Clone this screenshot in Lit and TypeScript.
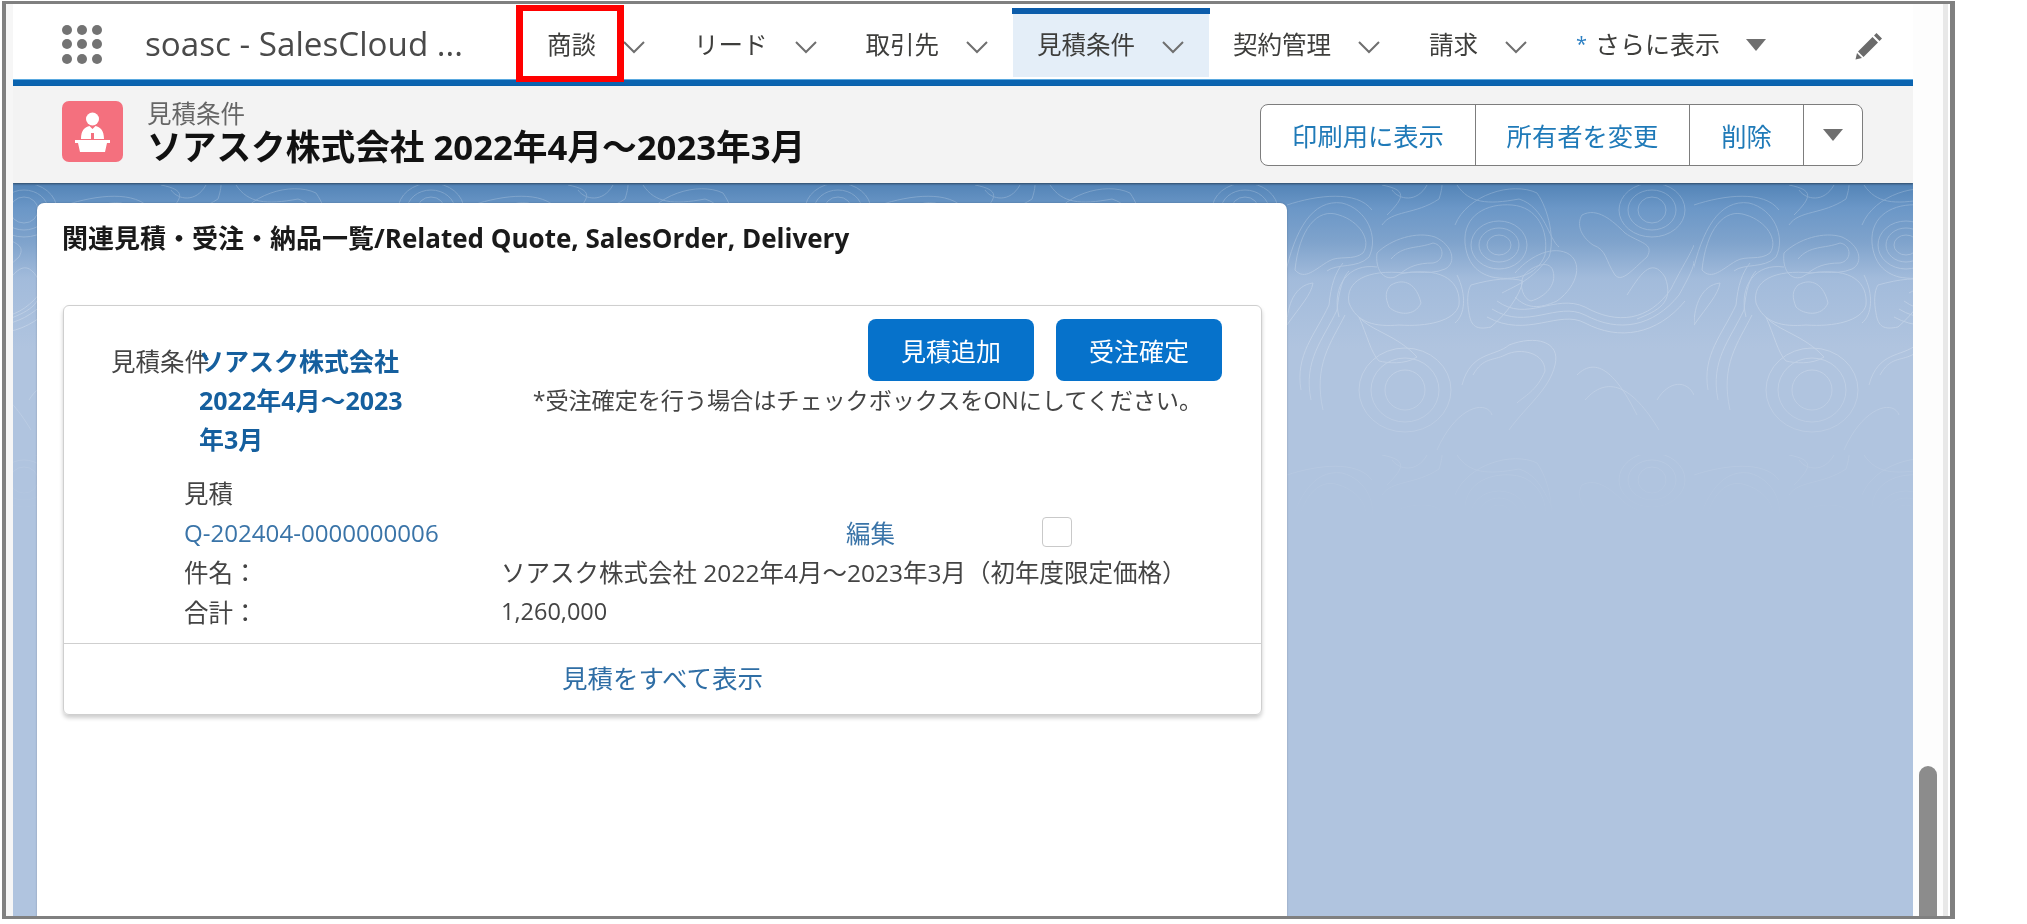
import { LitElement, html, css, svg } from "lit";
import { customElement } from "lit/decorators.js";

const chevron = html`<svg class="chev" viewBox="0 0 24 14"><path d="M2 2 L12 12 L22 2" fill="none" stroke="#6f6f6f" stroke-width="2"/></svg>`;

const contours = svg`
  <ellipse cx="212" cy="60" rx="12" ry="10"/><ellipse cx="212" cy="60" rx="20" ry="17"/><ellipse cx="212" cy="60" rx="28" ry="24"/>
  <path d="M178 58 C176 30 200 18 225 20 C250 22 262 45 258 70 C250 92 225 96 205 92 C190 88 180 78 178 58Z"/>
  <path d="M168 40 C180 10 225 -4 250 8 C262 25 268 55 262 72 C245 95 230 100 215 108"/>
  <ellipse cx="365" cy="25" rx="14" ry="13"/><ellipse cx="365" cy="25" rx="24" ry="20"/><ellipse cx="365" cy="25" rx="33" ry="27"/>
  <path d="M295 30 C310 22 325 35 338 48 C352 58 368 58 360 72 C345 85 335 98 328 90 C318 75 320 65 306 60 C292 50 290 38 295 30Z"/>
  <path d="M8 85 C12 45 30 22 52 30 C72 36 85 55 76 68 C66 76 52 70 42 76 C28 84 18 96 8 85Z"/>
  <path d="M-2 90 C8 45 25 14 55 18 C80 24 92 52 82 72 C70 84 50 78 40 86"/>
  <path d="M90 68 C104 54 130 46 148 52 C166 60 170 78 158 84 C140 92 120 82 108 92 C96 96 88 84 90 68Z"/>
  <path d="M104 74 C116 60 130 64 146 58 C158 60 158 76 146 78 C130 78 122 82 114 88"/>
  <path d="M0 20 C30 10 70 5 85 25 M95 40 C105 25 128 30 152 14 C155 5 155 0 155 0"/>
  <path d="M100 30 C118 12 120 5 95 0 M105 5 C112 15 130 18 140 0"/>
  <path d="M170 0 C182 18 200 20 232 14 C258 22 262 55 272 62"/>
  <path d="M104 100 C118 92 130 100 134 118 C128 132 110 130 102 122 C98 112 98 106 104 100Z"/>
  <path d="M62 118 C58 96 80 84 118 88 C158 82 174 98 172 120 C168 136 140 142 112 140 C88 142 70 138 62 118Z"/>
  <path d="M52 132 C44 100 62 78 90 82 M170 90 C180 110 178 130 168 138"/>
  <path d="M184 100 C205 94 224 92 236 96 C232 112 220 128 204 142 C190 145 184 142 182 128 C180 118 180 106 184 100Z"/>
  <path d="M236 92 C240 84 262 72 266 86 C270 100 258 112 244 116 C236 114 232 100 236 92Z"/>
  <path d="M228 88 C240 74 262 60 280 68 C296 76 292 100 270 116 C252 124 240 124 228 112"/>
  <path d="M210 116 C240 138 268 108 298 122 C330 140 362 136 384 104 C396 80 402 72 407 60"/>
  <path d="M205 124 C240 146 270 116 298 130 C332 148 366 142 392 110 C402 92 407 82 407 76"/>
  <path d="M200 132 C240 154 272 124 298 138 C332 156 370 150 398 116"/>
  <path d="M340 110 C352 92 364 70 378 92 C388 118 370 126 350 134"/>
  <path d="M0 140 C14 120 24 110 26 98 C8 100 0 120 0 140Z"/>
  <path d="M14 205 C8 170 28 150 42 120 C44 100 48 88 56 78"/>
  <path d="M24 215 C16 175 36 155 50 125 C52 105 56 92 62 86"/>
  <path d="M36 225 C26 180 44 158 58 130"/>
  <path d="M72 132 C84 146 110 150 130 172 C118 180 100 178 92 176 C84 168 80 150 72 132Z"/>
  <path d="M175 200 C184 166 208 172 222 160 C248 150 274 156 268 180 C262 205 240 220 222 245"/>
  <path d="M186 190 C196 172 206 176 218 170 C234 162 258 168 258 186 C250 206 236 212 230 218"/>
  <ellipse cx="118" cy="205" rx="20" ry="20"/><ellipse cx="118" cy="205" rx="34" ry="32"/><ellipse cx="118" cy="205" rx="46" ry="42"/>
  <path d="M290 190 C310 170 330 190 350 230 M298 215 C320 190 345 200 372 245"/>
  <path d="M370 215 C382 195 400 195 407 210 M150 265 C170 220 200 215 205 230"/>
`;

@customElement("app-root")
export class AppRoot extends LitElement {
  static styles = css`
    :host { display: block; width: 2027px; height: 924px; background: #fff; overflow: hidden;
      font-family: "Open Sans", "Noto Sans CJK JP", sans-serif; color: #444; }
    * { box-sizing: border-box; }
    .frame { display: flex; position: relative; width: 1953px; height: 918px; margin: 1px 0 0 2px;
      border: solid #808080; border-width: 3px 5px 3px 4px; background: #fff; filter: blur(0.5px); }
    .gutter { width: 7px; background: #f6f6f6; flex: none; }
    .app { width: 1900px; flex: none; display: flex; flex-direction: column; overflow: hidden; }
    .scroll { flex: 1; position: relative; background: #fdfdfd; border-right: 2px solid #fff; }
    .scroll::after { content: ""; position: absolute; top: 0; bottom: 0; right: 0; width: 5px; background: #e8e8e8; }
    .thumb { position: absolute; left: 6px; top: 762px; bottom: 0; width: 18px; background: #8c8c8c; border-radius: 9px 9px 0 0; }

    .nav { height: 76px; flex: none; background: #fff; display: flex; font-size: 24.5px; color: #3e3e3c; }
    .launcher { margin: 20px 0 0 49px; width: 40px; height: 41px; flex: none; }
    .appname { margin-left: 43px; width: 378px; flex: none; font-size: 33.2px; color: #4a4a4a; line-height: 80px; white-space: nowrap; }
    .tabs { display: flex; }
    .tab { position: relative; display: flex; align-items: center; gap: 26px; padding: 0 24px; margin: 9px 0 3px; white-space: nowrap; }
    .tab > span { margin-top: -4px; }
    .tab.active { background: #e4eef8; }
    .tab.active::before { content: ""; position: absolute; left: -1px; right: -1px; top: -5px; height: 6px; background: #0b5cab; }
    .chev { width: 24px; height: 14px; flex: none; margin-top: 4px; }
    .star { color: #2b7fc3; font-size: 20px; margin-right: 8px; }
    .more { gap: 26px; }
    .more .lbl { display: flex; align-items: center; font-size: 25px; }
    .tri { width: 20px; height: 12px; flex: none; }
    .pencil { width: 28px; height: 28px; margin: 28px 30px 0 auto; flex: none; }

    .rule { height: 6px; flex: none; background: #0b64b0; box-shadow: 0 -1px 0 #5aa9e0, 0 1px 2px #8fc1e6; position: relative; }
    .hdr { height: 97px; flex: none; background: #f3f3f3; display: flex; align-items: center; padding: 0 50px 0 49px; box-shadow: 0 1px 2px rgba(0,0,0,.45); position: relative; z-index: 1; }
    .hicon { width: 61px; height: 61px; flex: none; margin-top: -6px; border-radius: 7px; background: #f4707e; }
    .htext { margin-left: 24px; flex: 1; margin-top: -4px; }
    .hlabel { font-size: 24.5px; line-height: 28px; color: #666; }
    .htitle { font-size: 34.7px; line-height: 38px; font-weight: 700; color: #111; white-space: nowrap; }
    .actions { display: flex; height: 62px; width: 603px; flex: none; margin-top: 0; border: 1.5px solid #7d7d7d; border-radius: 8px; background: #fff; color: #1f7ab8; font-size: 25.3px; }
    .actions > div { display: flex; align-items: center; justify-content: center; border-left: 1.5px solid #7d7d7d; }
    .actions > div:first-child { border-left: 0; width: 214px; }
    .a2 { width: 214px; } .a3 { width: 114px; } .a4 { flex: 1; }

    .body { flex: 1; min-height: 0; position: relative; background: linear-gradient(#5283b6 0, #6b97c7 25px, #7fa3cc 59px, #a2bbdb 95px, #b0c4df 165px, #b0c4df 100%); padding: 20px 0 0 24px; }
    .topo { position: absolute; left: 0; top: 0; width: 100%; height: 340px; }
    .card { position: relative; width: 1250px; height: 760px; background: #fff; border-radius: 7px 7px 0 0; padding: 18px 26px 0; box-shadow: 0 0 2px rgba(0,0,0,.25); }
    .ctitle { font-size: 26px; font-weight: 700; line-height: 34px; color: #1a1a1a; white-space: nowrap; margin-left: -1px; }
    .inner { margin-top: 50px; width: 1199px; height: 410px; border: 1.5px solid #cfcfcf; border-radius: 6px; box-shadow: 0 3px 4px rgba(0,0,0,.2); display: flex; flex-direction: column; font-size: 24.5px; }
    .head { display: flex; align-items: flex-start; padding: 13px 39px 0 48px; height: 167px; }
    .qlabel { width: 88px; flex: none; white-space: nowrap; line-height: 39px; margin-top: 23px; margin-left: -1px; }
    .qlink { width: 215px; flex: none; font-weight: 700; font-size: 25px; color: #155f9e; line-height: 39px; margin-top: 23px; position: relative; }
    .right { flex: 1; display: flex; flex-direction: column; align-items: flex-end; }
    .btns { display: flex; gap: 22px; }
    .btn { width: 166px; height: 62px; border-radius: 8px; background: #0672cb; color: #fff; display: flex; align-items: center; justify-content: center; font-size: 25px; }
    .note { line-height: 40px; white-space: nowrap; margin: -1px 20px 0 0; letter-spacing: -.1px; font-size: 23.2px; }
    .rows { display: grid; grid-template-columns: 317px 345px 196px 30px; grid-auto-rows: 39.5px; align-items: center; padding-left: 120px; }
    .link { color: #3a74a8; }
    .qno { font-size: 24.1px; }
    .amt { font-size: 23.5px; }
    .span3 { grid-column: span 3; white-space: nowrap; }
    .box { width: 30px; height: 30px; border: 1.5px solid #c9c9c9; border-radius: 4px; background: #fff; }
    .foot { margin-top: auto; height: 71px; padding-bottom: 5px; border-top: 1.5px solid #cfcfcf; display: flex; align-items: center; justify-content: center; color: #2f6ea5; font-size: 25.5px; }
    .redbox { position: absolute; left: 510px; top: 1px; width: 108px; height: 77px; border: solid #f00; border-width: 6px 7px; }
  `;

  private tab(label: string, active = false) {
    return html`<div class="tab ${active ? "active" : ""}"><span>${label}</span>${chevron}</div>`;
  }

  render() {
    const dots = [6, 20, 35].flatMap((y) => [5, 20, 35].map((x) => svg`<circle cx=${x} cy=${y} r="5" fill="#737373"/>`));
    return html`
      <div class="frame">
        <div class="gutter"></div>
        <div class="app">
          <div class="nav">
            <svg class="launcher" viewBox="0 0 40 41">${dots}</svg>
            <div class="appname">soasc - SalesCloud ...</div>
            <div class="tabs">
              ${this.tab("商談")}${this.tab("リード")}${this.tab("取引先")}${this.tab("見積条件", true)}${this.tab("契約管理")}${this.tab("請求")}
              <div class="tab more">
                <span class="lbl"><span class="star">*</span>さらに表示</span>
                <svg class="tri" viewBox="0 0 20 12"><path d="M0 0 H20 L10 12Z" fill="#6f6f6f"/></svg>
              </div>
            </div>
            <svg class="pencil" viewBox="0 0 28 28"><path d="M21.5 1 L27 6.5 L24.5 9 L19 3.5Z M17.5 5 L23 10.5 L8.5 25 L3 19.5Z M2 21 L7 26 L0.5 27.5Z" fill="#6b6b6b"/></svg>
          </div>
          <div class="rule"></div>
          <div class="hdr">
            <svg class="hicon" viewBox="0 0 61 61">
              <circle cx="30.5" cy="18" r="6.5" fill="#fff"/>
              <path d="M19 38 C19 29 23 26 27.5 25 L30.5 28 L33.5 25 C38 26 42 29 42 38 H32 V32 H29 V38Z" fill="#fff"/>
              <path d="M13 39 H48 V42 H45 L43 51 H18 L16 42 H13Z" fill="#fff"/>
            </svg>
            <div class="htext">
              <div class="hlabel">見積条件</div>
              <div class="htitle">ソアスク株式会社 2022年4月～2023年3月</div>
            </div>
            <div class="actions">
              <div>印刷用に表示</div><div class="a2">所有者を変更</div><div class="a3">削除</div>
              <div class="a4"><svg class="tri" viewBox="0 0 20 12"><path d="M0 0 H20 L10 12Z" fill="#6f6f6f"/></svg></div>
            </div>
          </div>
          <div class="body">
            <svg class="topo">
              <defs>
                <pattern id="tile" width="407" height="270" patternUnits="userSpaceOnUse" patternTransform="translate(53 2)">
                  <g fill="none" stroke="#fff" stroke-width="1">${contours}</g>
                </pattern>
                <linearGradient id="fade" x1="0" y1="0" x2="0" y2="1">
                  <stop offset="0" stop-color="#fff" stop-opacity=".2"/>
                  <stop offset=".45" stop-color="#fff" stop-opacity=".24"/>
                  <stop offset=".8" stop-color="#fff" stop-opacity=".1"/>
                  <stop offset="1" stop-color="#fff" stop-opacity="0"/>
                </linearGradient>
                <mask id="m"><rect width="100%" height="100%" fill="url(#fade)"/></mask>
              </defs>
              <rect width="100%" height="100%" fill="url(#tile)" mask="url(#m)"/>
            </svg>
            <div class="card">
              <div class="ctitle">関連見積・受注・納品一覧/Related Quote, SalesOrder, Delivery</div>
              <div class="inner">
                <div class="head">
                  <div class="qlabel">見積条件</div>
                  <div class="qlink">ソアスク株式会社 2022年4月～2023年3月</div>
                  <div class="right">
                    <div class="btns"><div class="btn">見積追加</div><div class="btn">受注確定</div></div>
                    <div class="note">*受注確定を行う場合はチェックボックスをONにしてください。</div>
                  </div>
                </div>
                <div class="rows">
                  <div>見積</div><div></div><div></div><div></div>
                  <div class="link qno">Q-202404-0000000006</div><div></div><div class="link">編集</div><div class="box"></div>
                  <div>件名：</div><div class="span3">ソアスク株式会社 2022年4月～2023年3月（初年度限定価格）</div>
                  <div>合計：</div><div class="span3 amt">1,260,000</div>
                </div>
                <div class="foot">見積をすべて表示</div>
              </div>
            </div>
          </div>
        </div>
        <div class="scroll"><div class="thumb"></div></div>
        <div class="redbox"></div>
      </div>
    `;
  }
}
